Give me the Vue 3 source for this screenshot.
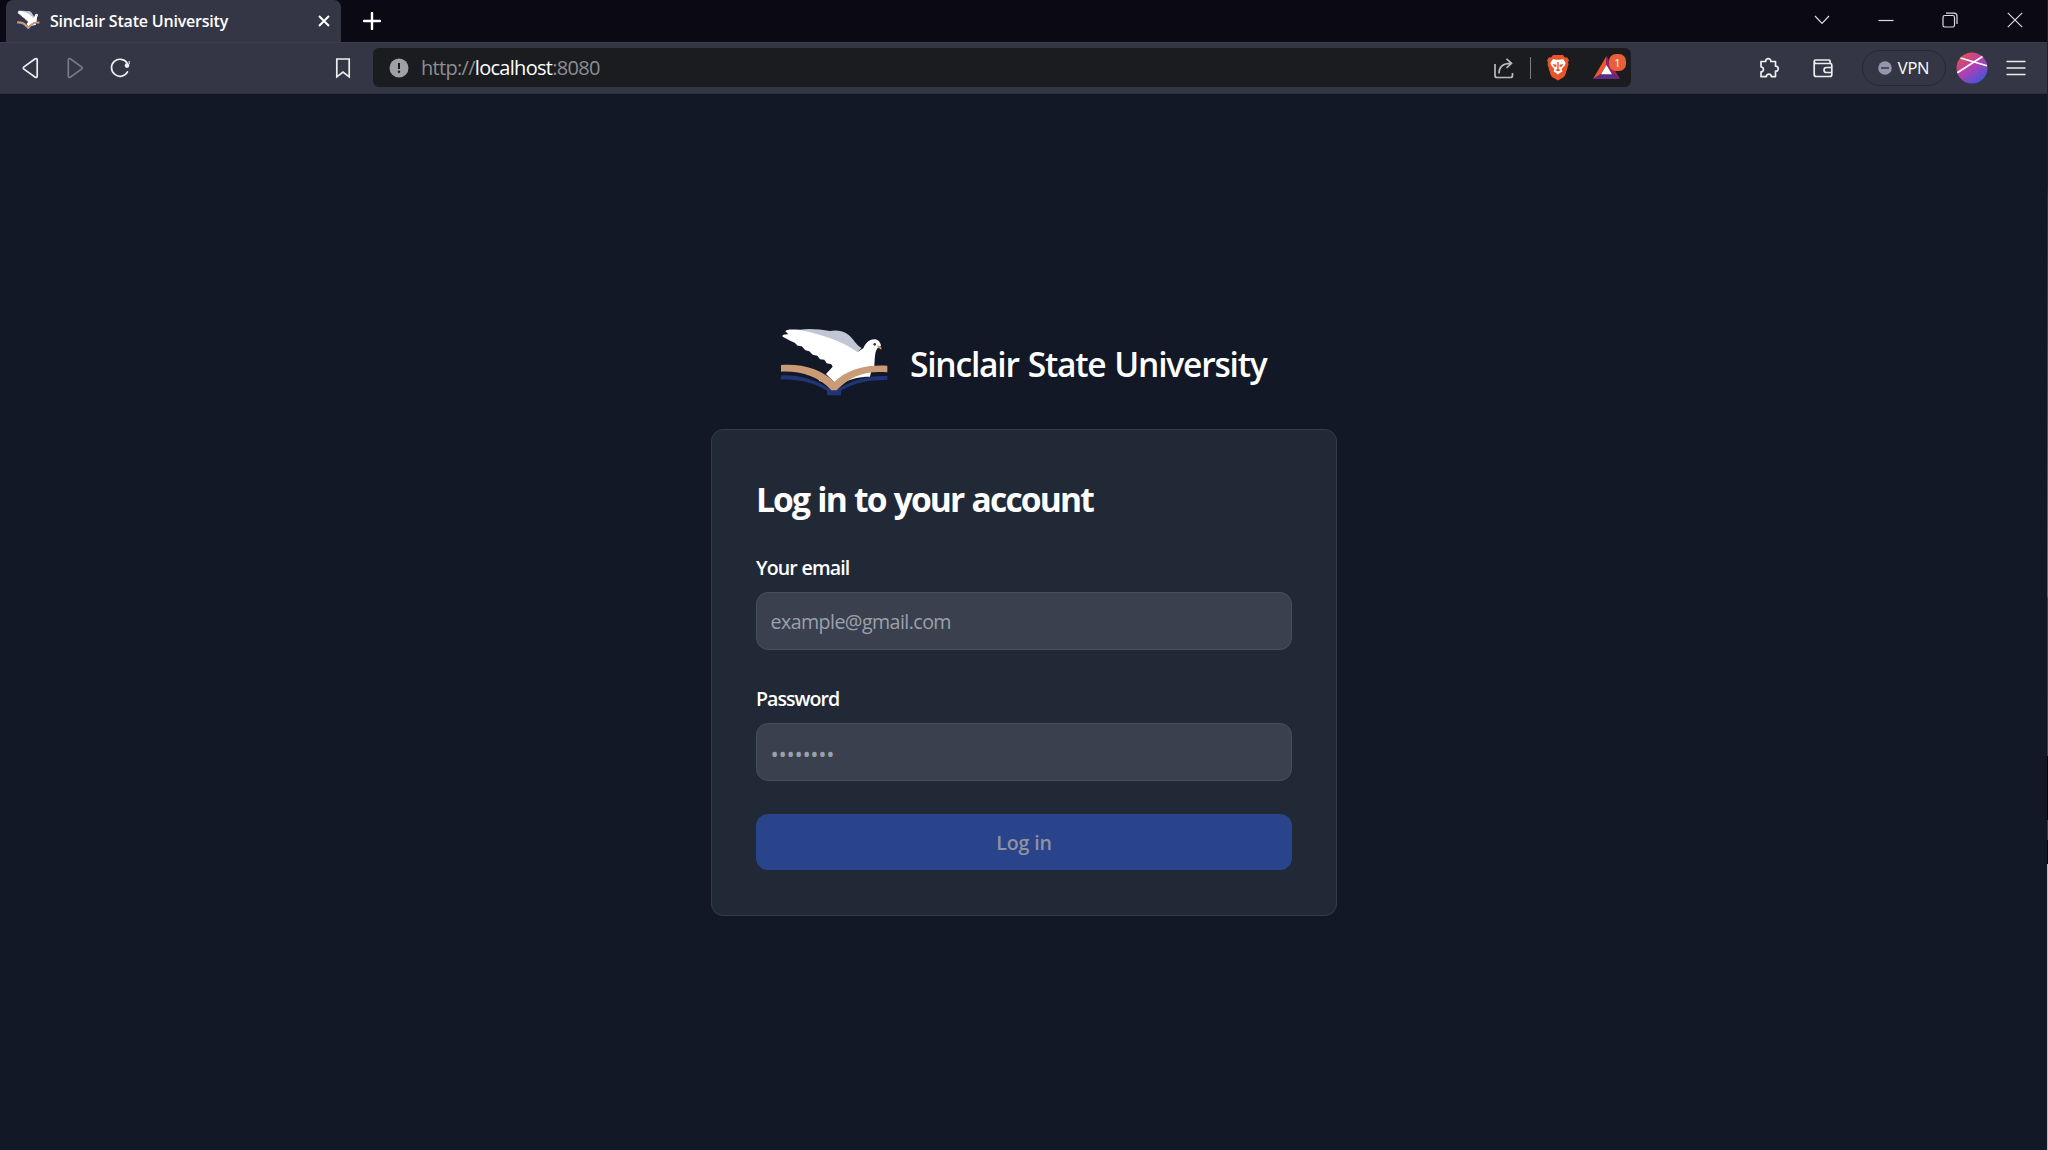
<script setup>
import { ref, h } from 'vue'

const email = ref('')
const password = ref('')

const shapes = [
  ['#203578', 'M33 165C85 163 135 176 184 208H200C250 176 300 165 352 167V179C300 178 255 186 213 211V225H171V211C130 186 85 176 33 178Z'],
  ['#c1c6d5', 'M88 28C125 24 150 28 180 32C200 28 220 32 235 43C250 54 258 74 275 83L260 97C210 75 150 50 100 36Z'],
  ['#ffffff', 'M46 33C48 27 60 27 88 28C150 42 215 60 262 95L280 84C286 70 296 56 315 57C325 58 331 66 333 76L326 80C313 90 315 115 313 137C270 140 225 160 193 186L168 161L188 139L184 132L170 129L163 118L150 117L142 106L128 103L118 93L106 90L95 78L83 76L74 67L62 62L38 49C36 44 42 42 55 42Z'],
  ['#ffffff', 'M222 180C250 162 275 155 303 155L300 169C265 169 240 177 218 187ZM146 182L152 174L170 186Z'],
  ['#c99b77', 'M33 134C95 129 155 146 193 185C228 148 290 132 352 136V156C290 150 240 166 200 210H184C145 168 95 152 33 154Z'],
  ['#d79a72', 'M322 75L334 80L334 88L323 81Z'],
]
const Logo = () =>
  h('svg', { viewBox: '30 20 330 210', preserveAspectRatio: 'none', 'aria-hidden': 'true' }, [
    ...shapes.map(([fill, d]) => h('path', { fill, d })),
    h('circle', { cx: 314, cy: 72, r: 4, fill: '#343a44' }),
  ])
</script>

<template>
  <div class="window">
    <header class="tabstrip">
      <div class="tab">
        <Logo class="favicon" />
        <span class="tab-title">Sinclair State University</span>
        <svg class="tab-close" width="12" height="12" viewBox="0 0 12 12"><path d="M1 1l10 10M11 1L1 11" stroke="#fff" stroke-width="2" /></svg>
      </div>
      <svg class="new-tab" width="18" height="18" viewBox="0 0 18 18"><path d="M9 1v16M1 9h16" stroke="#fff" stroke-width="2.4" stroke-linecap="round" /></svg>
      <div class="controls">
        <svg width="16" height="16" viewBox="0 0 16 16"><path d="M1 4l7 7.3L15 4" /></svg>
        <svg width="16" height="16" viewBox="0 0 16 16"><path d="M.5 8.5h15" /></svg>
        <svg width="16" height="16" viewBox="0 0 16 16"><rect x="1" y="3.5" width="11.5" height="11.5" rx="1.8" /><path d="M4 1.2h8a3 3 0 0 1 3 3V12" /></svg>
        <svg width="16" height="16" viewBox="0 0 16 16"><path d="M.8.8l14.4 14.4M15.2.8L.8 15.2" /></svg>
      </div>
    </header>

    <div class="toolbar">
      <nav class="nav">
        <svg class="ic" viewBox="0 0 24 24"><path d="M17.2 2.8 6 10.8q-1.4 1.2 0 2.4l11.2 8q2 .8 2-1.2V4q0-2-2-1.2Z" /></svg>
        <svg class="ic dim" viewBox="0 0 24 24"><path d="M7.3 2.8 18.5 10.8q1.4 1.2 0 2.4l-11.2 8q-2 .8-2-1.2V4q0-2 2-1.2Z" /></svg>
        <svg class="ic" viewBox="0 0 24 24"><path d="M19.2 7.2A8.5 8.5 0 1 0 19.5 15.8" stroke-linecap="round" /><circle cx="19" cy="9.6" r="2.3" fill="#eee" stroke="none" /><path d="M21.2 8.2V5" stroke-width="1" /></svg>
        <svg class="ic bookmark" viewBox="0 0 24 24"><path d="M5.8 3h12.4v17.8L12 16l-6.2 4.8Z" /></svg>
      </nav>
      <div class="address">
        <svg class="info" viewBox="0 0 20 20"><circle cx="10" cy="10" r="9.5" fill="#9da1a5" /><path d="M10 5v6" stroke="#1b1c20" stroke-width="2" /><circle cx="10" cy="13.7" r="1.2" fill="#1b1c20" /></svg>
        <span class="url">http://<b>localhost</b>:8080</span>
        <svg class="ic share" viewBox="0 0 24 24"><path d="M3 8v11.5q0 2 2 2h13.5q2 0 2-2V17M7 17.5C7 11 11 7.3 19 7.3M14.5 2.8l5 4.5-5 4.7" /></svg>
        <i class="divider"></i>
        <svg class="brave" width="22" height="27" viewBox="0 0 22 27">
          <path fill="#e8552b" d="M6 1h10l2 2.4 2-.2 2 3-1 2 .5 2-3 10q-.5 2-2 3L11 26.5l-5.500-3.300q-1.500-1-2-3L.5 10.200l.5-2-1-2 2-3 2 .2Z" />
          <path fill="#fff" d="m6 5 3 .8h4L16 5l2.600 3.700-.6 2.200-3.300 4 .6 2.600-2.100 1.300L11 20.600l-2.200-1.800-2.100-1.300.6-2.600-3.300-4-.6-2.200Z" />
          <path fill="#e8552b" d="m5.500 10 4 .7-.2 2.300-1.800-.3ZM16.500 10l-4 .7.2 2.300 1.800-.3ZM10.300 8h1.400v7h-1.400ZM8.200 16.300 11 14.600l2.800 1.700-2.800 1Z" />
        </svg>
        <div class="rewards">
          <svg width="28" height="24" viewBox="0 0 28 24"><path fill="#ee5730" d="M13.500 0 0 23l8-5 5.500-9Z" /><path fill="#9b1f63" d="M13.500 0 27 23l-8-5-5.500-9Z" /><path fill="#5b2c83" d="M0 23h27l-8-5H8Z" /><path fill="#fff" d="m13.500 9 5.500 9.300H8Z" /></svg>
          <span class="badge">1</span>
        </div>
      </div>
      <div class="actions">
        <svg class="ic" viewBox="0 0 24 24"><path d="M4 5.500h4.700c-.5-3.800 5.600-3.800 5.100 0H18.500v4.700c3.600-.5 3.600 5.500 0 5v5.400h-4.200c.3-3.300-5.200-3.300-4.900 0H4v-4.800c3.200.4 3.200-5.200 0-4.800Z" stroke-linejoin="round" /></svg>
        <svg class="ic wallet" viewBox="0 0 24 24"><path d="M3.200 5v13.500q0 2 2 2h13.600q2 0 2-2V9q0-1.500-1.500-1.500H4.500q-1.300-1-1.300-2 0-1.500 1.500-1.500h13.200q1.200 0 1.200 1.300v2M21 11.500h-5.500q-2.500 0-2.500 2.500t2.500 2.500H21" /></svg>
        <div class="vpn"><svg width="14" height="14" viewBox="0 0 14 14"><circle cx="7" cy="7" r="6.800" fill="#9496ae" /><path d="M3 7h8" stroke="#343645" stroke-width="1.500" /></svg><span>VPN</span></div>
        <svg class="avatar" viewBox="0 0 32 32">
          <defs><linearGradient id="orb" x1=".15" y1=".05" x2=".8" y2=".95"><stop offset="0" stop-color="#e4514f" /><stop offset=".48" stop-color="#b43fb0" /><stop offset="1" stop-color="#3e57dd" /></linearGradient></defs>
          <circle cx="16" cy="16" r="15.500" fill="url(#orb)" /><path d="M4.500 6 31 13.800M1.300 20.800 26.500 4.500" stroke="#fff" stroke-width="1.700" />
        </svg>
        <svg class="ic menu" viewBox="0 0 24 24"><path d="M2.500 5.500h19M2.500 12h19M2.500 18.500h19" /></svg>
      </div>
    </div>

    <main class="page">
      <div class="brand">
        <Logo class="logo" />
        <span class="brand-name">Sinclair State University</span>
      </div>
      <form class="card" @submit.prevent>
        <h1>Log in to your account</h1>
        <label for="email">Your email</label>
        <input id="email" v-model="email" type="email" placeholder="example@gmail.com" />
        <label for="password" class="pw-label">Password</label>
        <input id="password" v-model="password" class="pw" type="password" placeholder="••••••••" />
        <button type="submit" disabled>Log in</button>
      </form>
    </main>
    <i class="edge"></i>
  </div>
</template>

<style>
body { margin: 0; background: #121826; }
</style>

<style scoped>
* { box-sizing: border-box; }
.window { position: relative; width: 2048px; height: 1150px; overflow: hidden; display: flex; flex-direction: column; background: #121826; color: #fff; font-family: "Segoe UI", "Open Sans", "Noto Sans", sans-serif; }
svg { flex: none; display: block; }
.tabstrip { height: 42px; flex: none; display: flex; align-items: center; background: #0b0a14; padding-left: 6px; }
.tab { width: 335px; height: 42px; background: #343645; border-radius: 7px 7px 0 0; display: flex; align-items: center; padding: 0 11px; }
.favicon { width: 23px; height: 21px; margin-top: -2px; }
.tab-title { margin: -1px 0 0 10px; font-size: 16px; line-height: 22px; font-weight: 600; letter-spacing: -.2px; white-space: nowrap; }
.tab-close { margin-left: auto; }
.new-tab { margin-left: 22px; }
.controls { margin-left: auto; display: flex; gap: 48.300px; padding-right: 25.500px; margin-top: -2px; }
.controls svg { fill: none; stroke: #dcdce0; stroke-width: 1.200; }
.toolbar { height: 52px; flex: none; display: flex; align-items: center; background: #343645; border-top: 1px solid #3b3d4b; border-bottom: 1px solid #2a2d3b; padding-bottom: 1px; }
.ic { width: 24px; height: 24px; fill: none; stroke: #eeeeef; stroke-width: 1.700; }
.dim { stroke: #777986; }
.nav { width: 373px; display: flex; gap: 21px; padding: 0 18px; }
.bookmark { margin-left: auto; }
.address { width: 1258px; height: 39px; background: #1b1c20; border-radius: 6px; display: flex; align-items: center; padding-left: 15.500px; }
.info { width: 20px; height: 20px; }
.url { margin-left: 12.500px; font-size: 20px; line-height: 28px; color: #8c8e92; letter-spacing: -.7px; }
.url b { font-weight: 400; color: #fff; }
.share { margin-left: auto; stroke: #b9babd; }
.divider { width: 1px; height: 22px; background: #7b7c80; margin: 0 16px 0 14px; }
.rewards { position: relative; width: 38px; height: 24px; margin-left: 24px; }
.badge { position: absolute; left: 16px; top: -2px; width: 17px; height: 17px; border-radius: 7px; background: #ea5f3b; font-size: 11px; line-height: 17px; text-align: center; }
.actions { flex: 1; display: flex; align-items: center; justify-content: flex-end; padding-right: 20px; }
.wallet { margin-left: 30px; }
.vpn { width: 84px; height: 36px; margin-left: 27px; border: 1px solid #242630; border-radius: 18px; display: flex; align-items: center; justify-content: center; gap: 6px; padding-right: 1px; font-size: 16.500px; }
.vpn span { letter-spacing: -.3px; }
.avatar { width: 32px; height: 32px; margin-left: 10px; }
.menu { margin-left: 16px; }
.page { flex: 1; display: flex; flex-direction: column; align-items: center; padding-top: 233px; }
.brand { display: flex; height: 70px; width: 488px; margin-bottom: 32px; }
.logo { width: 110px; height: 70px; }
.brand-name { margin: 14px 0 0 20px; font-size: 33.600px; line-height: 47px; font-weight: 600; letter-spacing: -1.230px; word-spacing: 1.500px; white-space: nowrap; }
.card { width: 626px; height: 487px; background: #222936; border: 1px solid #333c49; border-radius: 12px; padding: 45px 44px; display: flex; flex-direction: column; }
h1 { margin: 0 0 31px; height: 47px; font-size: 33.600px; line-height: 48px; font-weight: 700; letter-spacing: -1.850px; word-spacing: 1.200px; white-space: nowrap; }
label { font-size: 19.600px; line-height: 30px; height: 28px; font-weight: 600; letter-spacing: -.9px; word-spacing: .5px; margin-bottom: 11px; }
.pw-label { line-height: 29px; letter-spacing: -1px; }
input { width: 536px; height: 58px; flex: none; margin: 0 0 34px; background: #3a404e; border: 1px solid #464f5c; border-radius: 12px; padding: 1px 14px 0 13.500px; color: #fff; font: 19.600px "Segoe UI", "Open Sans", "Noto Sans", sans-serif; letter-spacing: -.55px; outline: 0; }
input::placeholder { color: #9aa1ac; opacity: 1; }
input.pw { margin-bottom: 33px; font-size: 22px; letter-spacing: -.3px; }
button { width: 536px; height: 56px; flex: none; border: 0; border-radius: 12px; padding: 1px 0 0; background: #2a448c; color: #8e93a0; font: 600 19.600px "Segoe UI", "Open Sans", "Noto Sans", sans-serif; letter-spacing: -.15px; }
.edge { position: absolute; right: 0; top: 0; width: 1px; height: 1150px; background: linear-gradient(#241b3c 0 185px, #4a1f45 200px, #8a2a50 400px, #96543f 560px 597px, #7c2450 598px 700px, #842444 700px 756px, #050509 756px 820px, #43306c 820px 840px, #080610 840px 864px, #b5bcc4 864px); }
</style>
